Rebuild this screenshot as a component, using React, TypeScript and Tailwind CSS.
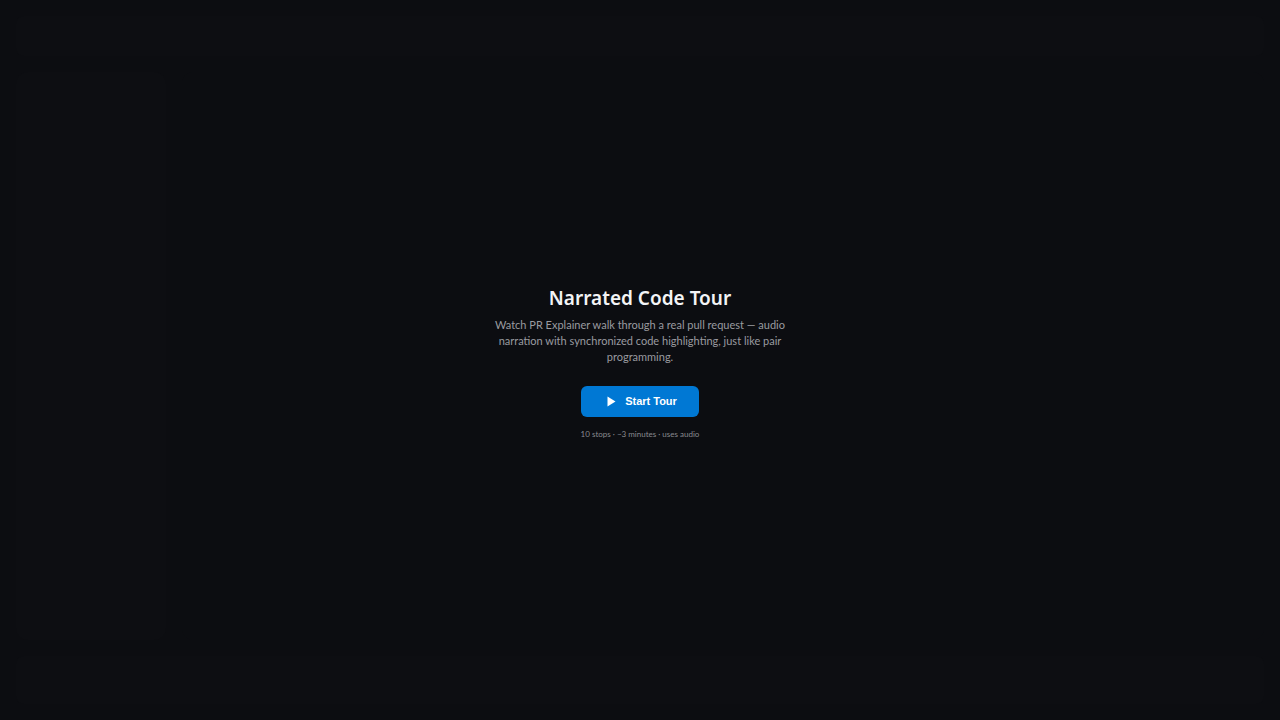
export default function App() {
  return (
    <div className="relative h-[720px] w-[1280px] overflow-hidden bg-[#0c0d11] font-['Noto_Sans',sans-serif]">
      {/* faint ghost of the page behind the overlay */}
      <div className="absolute inset-0 flex flex-col gap-4 p-4 opacity-60">
        <div className="h-10 rounded-lg bg-[#0e0f13]" />
        <div className="flex flex-1 gap-4">
          <div className="w-[150px] rounded-xl bg-[#0e0f13]" />
          <div className="flex-1 rounded-xl bg-[#0d0e12]" />
        </div>
        <div className="h-12 rounded-lg bg-[#0e0f13]" />
      </div>

      <div className="relative flex h-full flex-col items-center justify-center pt-[4px]">
        <h1 className="text-[19px] font-semibold leading-[28px] text-[#f3f4f6]">Narrated Code Tour</h1>
        <p className="mt-[5px] w-[296px] text-center font-['Lato',sans-serif] text-[11px] leading-[16px] text-[#9a9ba0]">
          Watch PR Explainer walk through a real pull request — audio narration with synchronized code highlighting, just like pair programming.
        </p>
        <button className="mt-[21px] flex h-[31px] w-[118px] items-center justify-center gap-[9px] rounded-md bg-[#0078d4] pl-[4px] font-['Liberation_Sans',sans-serif] text-[11px] font-bold text-white">
          <svg width="9" height="11" viewBox="0 0 9 11" fill="white">
            <path d="M0.5 0.5 L8.5 5.5 L0.5 10.5 Z" />
          </svg>
          Start Tour
        </button>
        <div className="mt-[11px] font-['Lato',sans-serif] text-[8px] leading-[12px] text-[#8a8b90]">10 stops · ~3 minutes · uses audio</div>
      </div>
    </div>
  );
}
